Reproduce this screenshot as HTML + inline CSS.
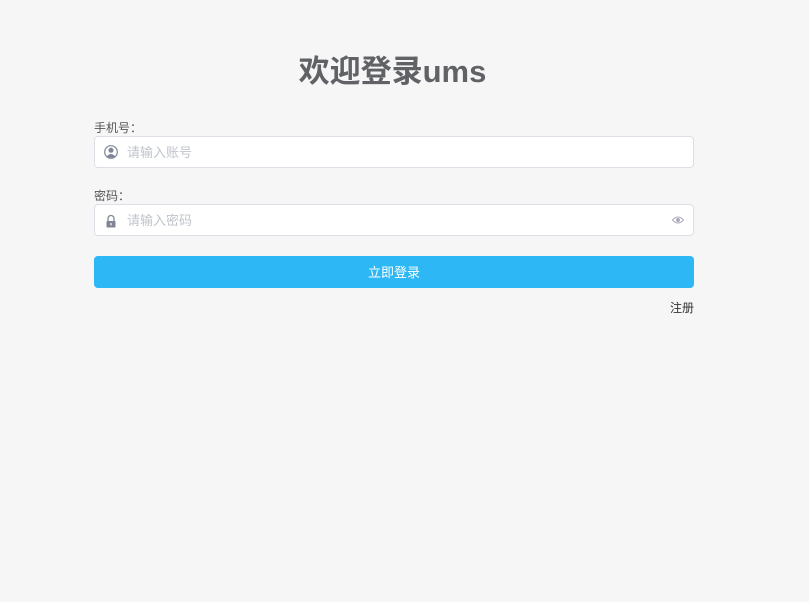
<!DOCTYPE html>
<html><head><meta charset="utf-8"><style>
*{margin:0;padding:0;box-sizing:border-box}
body{width:809px;height:602px;background:#f6f6f6;font-family:"Liberation Sans","Noto Sans CJK SC",sans-serif;position:relative;overflow:hidden}
h1{position:absolute;top:52px;left:-12px;width:809px;text-align:center;font-size:31px;font-weight:bold;color:#606266;line-height:40px}
.lbl{position:absolute;left:94px;font-size:12px;color:#555;line-height:14px}
.inp{position:absolute;left:94px;width:600px;height:32px;background:#fff;border:1px solid #dcdfe6;border-radius:4px}
.ph{position:absolute;left:32px;top:8px;font-size:13px;color:#c0c4cc;line-height:16px}
.ic{position:absolute;left:9px;top:8px}
.btn{position:absolute;left:94px;top:256px;width:600px;height:32px;background:#2db7f5;border-radius:4px;color:#fff;font-size:13px;text-align:center;line-height:33px}
.reg{position:absolute;left:670px;top:299px;font-size:12px;color:#333}
</style></head><body>
<h1>欢迎登录ums</h1>
<div class="lbl" style="top:121px">手机号：</div>
<div class="inp" style="top:136px">
<svg class="ic" width="14" height="14" viewBox="0 0 14 14"><circle cx="7" cy="7" r="6.3" fill="none" stroke="#808695" stroke-width="1.2"/><circle cx="7" cy="5.3" r="2.5" fill="#808695"/><path d="M2.8 11.5 Q7 6.5 11.2 11.5 Q7 14 2.8 11.5Z" fill="#808695"/></svg>
<span class="ph">请输入账号</span></div>
<div class="lbl" style="top:189px">密码：</div>
<div class="inp" style="top:204px">
<svg class="ic" style="top:9px" width="14" height="14" viewBox="0 0 14 14"><path d="M4 7V4.5a3 3 0 0 1 6 0V7" fill="none" stroke="#808695" stroke-width="1.3"/><rect x="2.5" y="7" width="9" height="6.5" rx="1" fill="#808695"/><rect x="6.4" y="9" width="1.2" height="2.3" fill="#fff"/></svg>
<span class="ph">请输入密码</span>
<svg style="position:absolute;left:577px;top:10px" width="12" height="10" viewBox="0 0 12 10"><path d="M0.5 5 Q6 -1 11.5 5 Q6 11 0.5 5Z" fill="none" stroke="#aab" stroke-width="1"/><circle cx="6" cy="5" r="2" fill="#aab"/></svg>
</div>
<div class="btn">立即登录</div>
<div class="reg">注册</div>
</body></html>
